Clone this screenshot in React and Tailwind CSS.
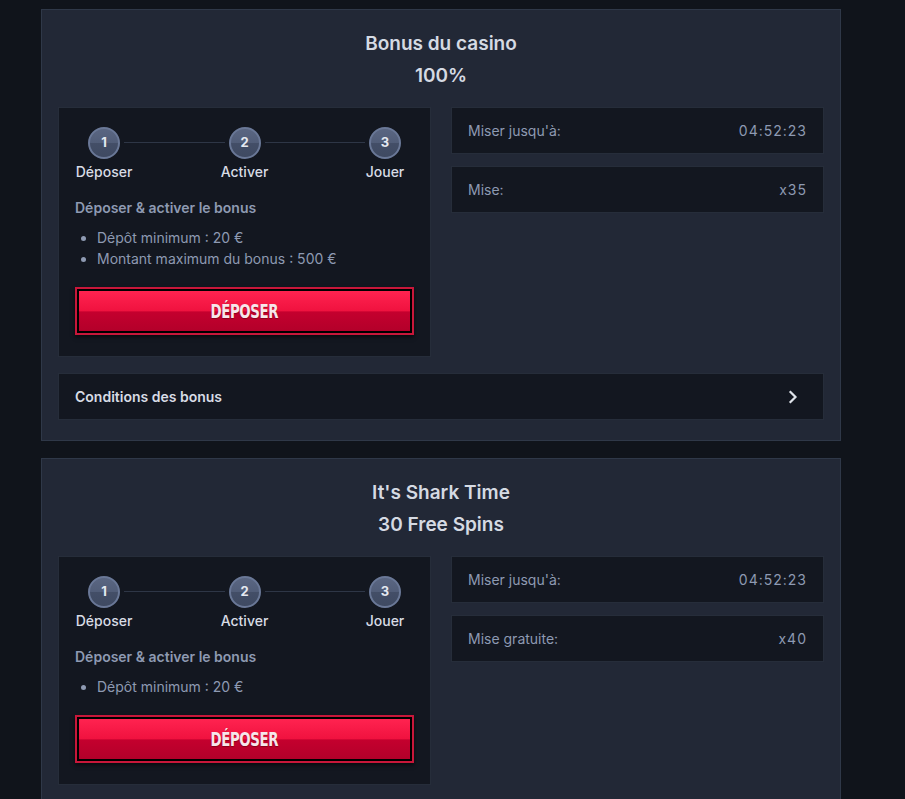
import React from 'react';

const bonuses = [
  {
    title: 'Bonus du casino',
    amount: '100%',
    bullets: ['Dépôt minimum : 20 €', 'Montant maximum du bonus : 500 €'],
    rows: [
      { label: "Miser jusqu'à:", value: '04:52:23' },
      { label: 'Mise:', value: 'x35' },
    ],
    conditions: true,
  },
  {
    title: "It's Shark Time",
    amount: '30 Free Spins',
    bullets: ['Dépôt minimum : 20 €'],
    rows: [
      { label: "Miser jusqu'à:", value: '04:52:23' },
      { label: 'Mise gratuite:', value: 'x40' },
    ],
    conditions: false,
  },
];

const steps = ['Déposer', 'Activer', 'Jouer'];

function Steps() {
  return (
    <div className="flex items-start justify-between">
      {steps.map((step, i) => (
        <React.Fragment key={step}>
          <div className="flex w-[58px] flex-col items-center">
            <div className="flex h-[32px] w-[32px] items-center justify-center rounded-full border-2 border-[#6a7897] bg-[linear-gradient(180deg,#5a6682_0%,#515d78_50%,#434e67_50%,#3f4a62_100%)] text-[13px] font-bold text-[#e4e8f0]">
              {i + 1}
            </div>
            <span className="mt-[3px] text-[14px] font-medium leading-[20px] text-[#d8dce5]">{step}</span>
          </div>
          {i < steps.length - 1 && (
            <div className="mx-[-9px] mt-[15px] h-px flex-1 bg-[#2e3646]" />
          )}
        </React.Fragment>
      ))}
    </div>
  );
}

function DepositButton() {
  return (
    <button className="mt-[18px] block h-[48px] w-full border-2 border-[#c8173a] bg-black p-[2px] shadow-[0_2px_4px_rgba(0,0,0,0.6)]">
      <span className="flex h-full w-full items-center justify-center bg-[linear-gradient(180deg,#ff2350_0%,#f0123f_50%,#c4002e_52%,#b3002a_100%)]">
        <span
          className="inline-block scale-x-[0.78] text-[19px] font-bold uppercase tracking-[-0.5px] text-[#f7e6ea]"
          style={{ fontFamily: '"DejaVu Sans Condensed", "Liberation Sans", sans-serif', textShadow: '0 1px 1px rgba(80,0,10,0.5)' }}
        >
          Déposer
        </span>
      </span>
    </button>
  );
}

function BonusCard({ bonus }) {
  return (
    <div className="w-[800px] border border-[#2f3848] bg-[#222836] px-4 pt-[18px] pb-5">
      <h2 className="text-center text-[19px] font-semibold leading-[32px] text-[#d5dae3]">
        {bonus.title}
        <br />
        {bonus.amount}
      </h2>

      <div className="mt-[15px] grid grid-cols-2 gap-5">
        <div className="border border-[#262d3a] bg-[#131720] px-4 pt-[19px] pb-[21px]">
          <Steps />
          <p className="mt-[16px] text-[14px] font-semibold leading-[20px] text-[#8e9ab2]">Déposer &amp; activer le bonus</p>
          <ul className="mt-[9px] list-disc pl-[22px] text-[14px] leading-[21px] text-[#8e9ab2]">
            {bonus.bullets.map((b) => (
              <li key={b}>{b}</li>
            ))}
          </ul>
          <DepositButton />
        </div>

        <div className="flex flex-col gap-3">
          {bonus.rows.map((row) => (
            <div key={row.label} className="flex h-[47px] items-center justify-between border border-[#262d3a] bg-[#131720] px-4 text-[14px] text-[#8e9ab2]">
              <span>{row.label}</span>
              <span className="tracking-[1px]">{row.value}</span>
            </div>
          ))}
        </div>
      </div>

      {bonus.conditions && (
        <div className="mt-4 flex h-[47px] items-center justify-between border border-[#262d3a] bg-[#131720] px-4">
          <span className="text-[14px] font-semibold text-[#d8dce5]">Conditions des bonus</span>
          <svg width="10" height="14" viewBox="0 0 10 14" fill="none" className="mr-[9px]">
            <path d="M2.5 2l5 5-5 5" stroke="#dfe3ea" strokeWidth="2.2" strokeLinecap="square" />
          </svg>
        </div>
      )}
    </div>
  );
}

export default function App() {
  return (
    <div className="min-h-screen bg-[#10141b] pl-[41px] pt-[9px]" style={{ fontFamily: 'Inter, "Noto Sans", sans-serif' }}>
      <div className="flex flex-col gap-[17px]">
        {bonuses.map((b) => (
          <BonusCard key={b.title} bonus={b} />
        ))}
      </div>
    </div>
  );
}
